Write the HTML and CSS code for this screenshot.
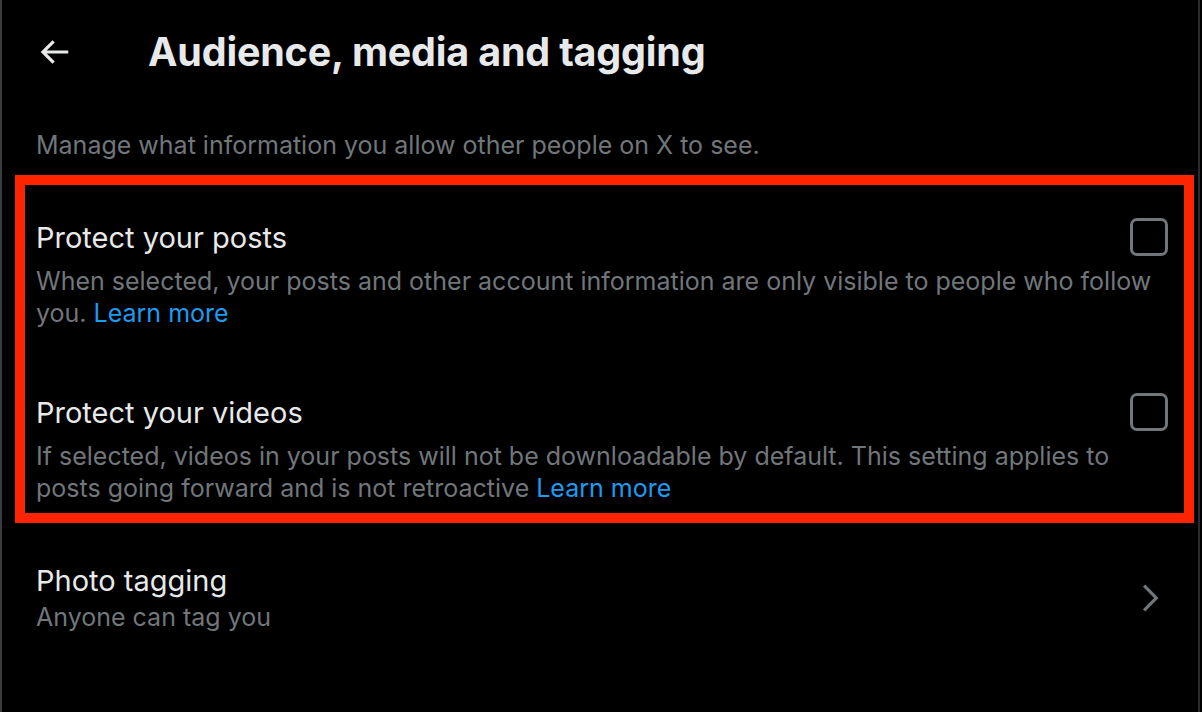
FILE: index.html
```html
<!DOCTYPE html>
<html lang="en">
<head>
<meta charset="utf-8">
<title>Audience, media and tagging</title>
<link rel="stylesheet" href="styles.css">
</head>
<body>
<div class="page">
  <header class="header">
    <button class="back" aria-label="Back">
      <svg viewBox="0 0 24 24" width="38" height="38"><path fill="currentColor" d="M7.414 13l5.043 5.04-1.414 1.42L3.586 12l7.457-7.46 1.414 1.42L7.414 11H21v2H7.414z"/></svg>
    </button>
    <h1 class="title">Audience, media and tagging</h1>
  </header>
  <p class="intro">Manage what information you allow other people on X to see.</p>
  <section class="highlight">
    <div class="item item-first">
      <div class="item-title">Protect your posts</div>
      <span class="checkbox"></span>
      <div class="item-desc">When selected, your posts and other account information are only visible to people who follow you. <a class="link" href="#">Learn more</a></div>
    </div>
    <div class="item item-second">
      <div class="item-title">Protect your videos</div>
      <span class="checkbox"></span>
      <div class="item-desc">If selected, videos in your posts will not be downloadable by default. This setting applies to posts going forward and is not retroactive <a class="link" href="#">Learn more</a></div>
    </div>
  </section>
  <div class="row">
    <div class="row-text">
      <div class="item-title">Photo tagging</div>
      <div class="row-sub">Anyone can tag you</div>
    </div>
    <svg class="chevron" viewBox="0 0 24 24" width="38" height="38"><path fill="currentColor" d="M14.586 12L7.543 4.96l1.414-1.42L17.414 12l-8.457 8.46-1.414-1.42L14.586 12z"/></svg>
  </div>
</div>
</body>
</html>
```
FILE: styles.css
```css
html, body {
  margin: 0;
  padding: 0;
  background: #000;
  height: 100%;
}
body {
  font-family: Inter, "Open Sans", "Liberation Sans", sans-serif;
  color: #e7e9ea;
  overflow: hidden;
}
.page {
  min-height: 712px;
  border-left: 2px solid #3a3b3d;
  border-right: 2px solid #2a2b2d;
  box-sizing: border-box;
  width: 1200px;
}
.header {
  display: flex;
  align-items: center;
  height: 104px;
}
.back {
  background: none;
  border: 0;
  padding: 0;
  margin-left: 33px;
  width: 38px;
  height: 38px;
  color: #e7e9ea;
  display: flex;
}
.title {
  margin: 0 0 0 75px;
  font-size: 39.5px;
  font-weight: 700;
  letter-spacing: -0.2px;
  line-height: 44px;
}
.intro {
  margin: 25px 0 0 34px;
  font-size: 25px;
  line-height: 32px;
  color: #71767b;
}
.highlight {
  margin: 14px 4px 0 13px;
  border: 10px solid #ff2400;
  padding: 0 16px 9px 11px;
}
.item {
  display: grid;
  grid-template-columns: 1fr auto;
  align-items: start;
}
.item-first { padding-top: 35px; }
.item-second { padding-top: 66px; }
.item-title {
  font-size: 29px;
  line-height: 36px;
}
.item-desc {
  grid-column: 1 / -1;
  margin-top: 9px;
  font-size: 25px;
  line-height: 32px;
  color: #71767b;
}
.link {
  color: #1d9bf0;
  text-decoration: none;
}
.checkbox {
  width: 38px;
  height: 38px;
  box-sizing: border-box;
  border: 3px solid #71767b;
  border-radius: 7px;
  margin-top: -2px;
  margin-bottom: -2px;
}
.row {
  display: flex;
  align-items: center;
  padding: 40px 29px 0 34px;
}
.row-text { flex: 1; }
.row-sub {
  margin-top: 2px;
  font-size: 25px;
  line-height: 32px;
  color: #71767b;
}
.chevron {
  color: #71767b;
  flex: none;
}
```
